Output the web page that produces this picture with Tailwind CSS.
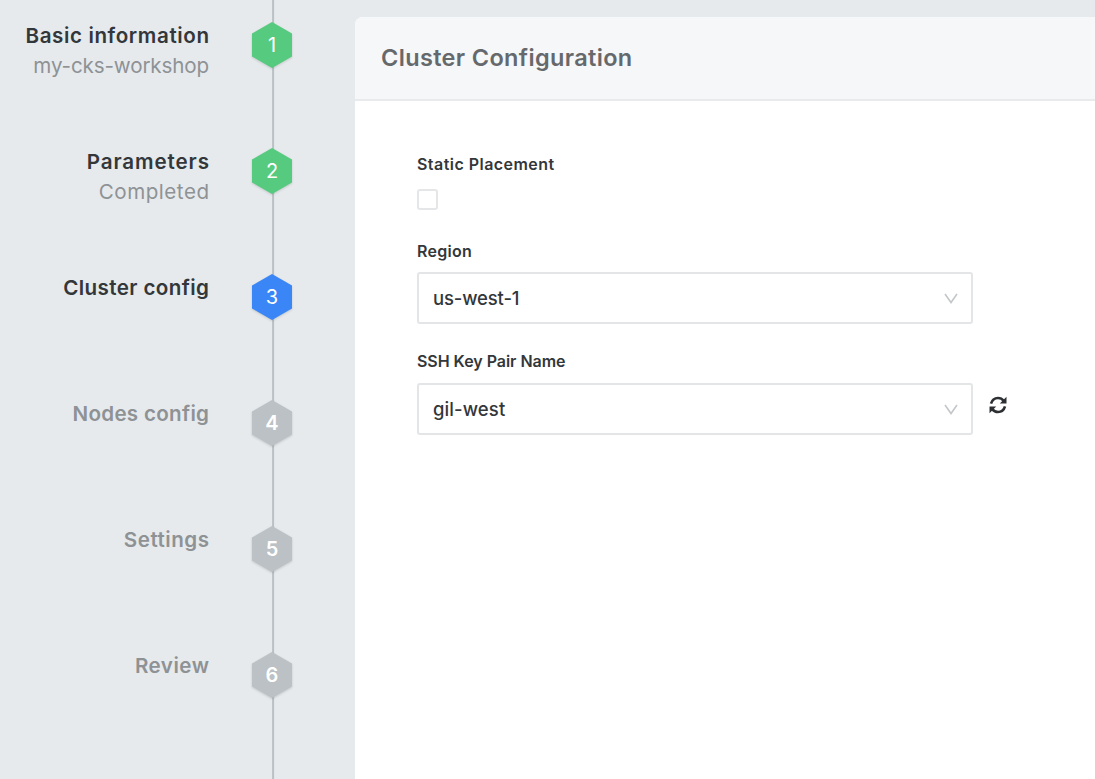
<!DOCTYPE html>
<html lang="en">
<head>
<meta charset="utf-8">
<title>Cluster Configuration</title>
<script src="https://cdn.jsdelivr.net/npm/@tailwindcss/browser@4"></script>
</head>
<body class="flex h-[779px] w-[1095px] overflow-hidden bg-[#e6eaed] font-['Inter',sans-serif] text-[#33373a]">
<svg class="hidden">
  <symbol id="hex" viewBox="0 0 40 46"><path d="M20 0 40 11.5v23L20 46 0 34.5v-23z" fill="currentColor"/></symbol>
</svg>
<aside class="relative flex h-full w-[355px] shrink-0 flex-col pt-[21px]">
  <div class="absolute top-0 left-[271.5px] h-full w-[2px] translate-x-[0.1px] bg-[#bbc0c4]"></div>
  <div class="flex h-[126px] shrink-0 gap-[43px]">
    <div class="w-[209px] text-right text-[20.6px] leading-[30px]"><p class="font-semibold"><span class="-mr-[0.6px] tracking-[0.6px]">Basic information</span></p><p class="text-[#8e9295]"><span class="tracking-[-0.13px]">my-cks-workshop</span></p></div>
    <div class="relative mt-px h-[46px] w-[40px] text-[#56ca7f]"><svg class="size-full drop-shadow-[0_1px_1px_rgba(0,0,0,0.15)]"><use href="#hex"/></svg><span class="absolute inset-0 text-center text-[20px] leading-[47px] text-white">1</span></div>
  </div>
  <div class="flex h-[126px] shrink-0 gap-[43px]">
    <div class="w-[209px] text-right text-[20.6px] leading-[30px]"><p class="font-semibold"><span class="-mr-[0.9px] tracking-[0.9px]">Parameters</span></p><p class="text-[#8e9295]"><span class="-mr-[0.5px] tracking-[0.5px]">Completed</span></p></div>
    <div class="relative mt-px h-[46px] w-[40px] text-[#56ca7f]"><svg class="size-full drop-shadow-[0_1px_1px_rgba(0,0,0,0.15)]"><use href="#hex"/></svg><span class="absolute inset-0 text-center text-[20px] leading-[47px] text-white">2</span></div>
  </div>
  <div class="flex h-[126px] shrink-0 gap-[43px]">
    <div class="w-[209px] text-right text-[20.6px] leading-[30px]"><p class="font-semibold"><span class="-mr-[0.4px] tracking-[0.4px]">Cluster config</span></p></div>
    <div class="relative mt-px h-[46px] w-[40px] text-[#3b86f7]"><svg class="size-full drop-shadow-[0_1px_1px_rgba(0,0,0,0.15)]"><use href="#hex"/></svg><span class="absolute inset-0 text-center text-[20px] leading-[47px] text-white">3</span></div>
  </div>
  <div class="flex h-[126px] shrink-0 gap-[43px]">
    <div class="w-[209px] text-right text-[20.6px] leading-[30px] text-[#8e9295]"><p class="font-semibold"><span class="-mr-[0.3px] tracking-[0.3px]">Nodes config</span></p></div>
    <div class="relative mt-px h-[46px] w-[40px] text-[#bbc1c5]"><svg class="size-full drop-shadow-[0_1px_1px_rgba(0,0,0,0.15)]"><use href="#hex"/></svg><span class="absolute inset-0 text-center text-[20px] leading-[47px] font-semibold text-white">4</span></div>
  </div>
  <div class="flex h-[126px] shrink-0 gap-[43px]">
    <div class="w-[209px] text-right text-[20.6px] leading-[30px] text-[#8e9295]"><p class="font-semibold"><span class="-mr-[0.5px] tracking-[0.5px]">Settings</span></p></div>
    <div class="relative mt-px h-[46px] w-[40px] text-[#bbc1c5]"><svg class="size-full drop-shadow-[0_1px_1px_rgba(0,0,0,0.15)]"><use href="#hex"/></svg><span class="absolute inset-0 text-center text-[20px] leading-[47px] font-semibold text-white">5</span></div>
  </div>
  <div class="flex h-[126px] shrink-0 gap-[43px]">
    <div class="w-[209px] text-right text-[20.6px] leading-[30px] text-[#8e9295]"><p class="font-semibold"><span class="-mr-[0.5px] tracking-[0.5px]">Review</span></p></div>
    <div class="relative mt-px h-[46px] w-[40px] text-[#bbc1c5]"><svg class="size-full drop-shadow-[0_1px_1px_rgba(0,0,0,0.15)]"><use href="#hex"/></svg><span class="absolute inset-0 text-center text-[20px] leading-[47px] font-semibold text-white">6</span></div>
  </div>
</aside>
<main class="mt-[17px] flex-1 overflow-hidden rounded-tl-lg bg-white">
  <header class="flex h-[84px] items-center border-b-2 border-[#e8eaec] bg-[#f6f7f9] pl-[26px]">
    <h1 class="text-[23.5px] leading-8 font-semibold tracking-[0.35px] text-[#66696c]">Cluster Configuration</h1>
  </header>
  <form class="flex flex-col pt-[51px] pl-[62px]">
    <label class="h-[24px] text-[16px] leading-6 font-semibold tracking-[0.46px]">Static Placement</label>
    <div class="mt-[13px] size-[21px] rounded-[3px] border-2 border-[#e4e6e8]"></div>
    <label class="mt-[29px] h-[24px] text-[16px] leading-6 font-semibold tracking-[0.25px]">Region</label>
    <div class="mt-[9px] flex h-[52px] w-[556px] items-center justify-between rounded-[3px] border-2 border-[#e3e5e6] pr-[13px] pl-[14px] text-[18.5px]"><span class="pt-[2px] font-medium tracking-[-0.15px]">us-west-1</span>
      <svg class="h-[11px] w-[14px] text-[#c4c7c9]" viewBox="0 0 14 11" fill="none" stroke="currentColor" stroke-width="1.6"><path d="M1 1l6 8.5L13 1"/></svg></div>
    <label class="mt-[25px] h-[24px] text-[16px] leading-6 font-semibold tracking-[-0.04px]">SSH Key Pair Name</label>
    <div class="mt-[10px] flex items-center gap-[15px]">
      <div class="flex h-[52px] w-[556px] items-center justify-between rounded-[3px] border-2 border-[#e3e5e6] pr-[13px] pl-[14px] text-[18.5px]"><span class="pt-[1px] font-medium tracking-[0.1px]">gil-west</span>
        <svg class="h-[11px] w-[14px] text-[#c4c7c9]" viewBox="0 0 14 11" fill="none" stroke="currentColor" stroke-width="1.6"><path d="M1 1l6 8.5L13 1"/></svg></div>
      <svg class="mb-[8px] ml-px h-[18px] w-[18px]" viewBox="0 0 18 18" fill="none" stroke="#2d3033" stroke-width="2.6"><path d="M2 7.6C3 4.2 5.600 2 9 2c2.400 0 4.300 1 5.800 2.900M16 10.400C15 13.800 12.400 16 9 16c-2.400 0-4.300-1-5.800-2.900"/><path d="M17.500 .8v6.700h-6.700zM.5 17.200v-6.700h6.700z" fill="#2d3033" stroke="none"/></svg>
    </div>
  </form>
</main>
</body>
</html>
